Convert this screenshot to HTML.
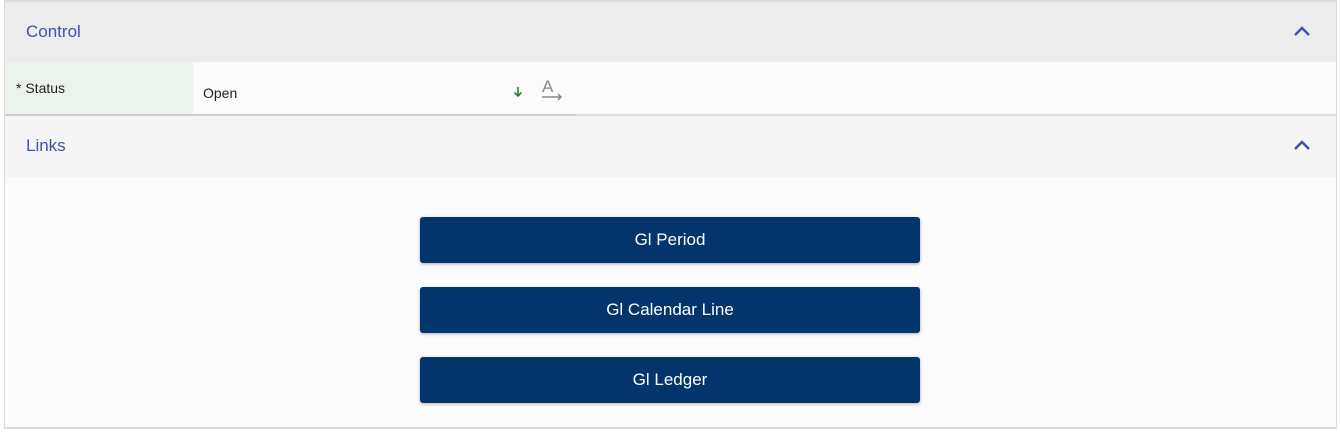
<!DOCTYPE html>
<html><head><style>
body{margin:0;width:1340px;height:432px;background:#fff;font-family:"Liberation Sans",sans-serif;position:relative;overflow:hidden}
.box{position:absolute;left:4px;top:0;width:1331px;height:425px;border:1px solid #dcdcdc;border-top:2px solid #dcdcdc;border-bottom:2px solid #dcdcdc;background:#fbfbfb}
.h{position:absolute;left:0;right:0;height:60px;}
.h span{position:absolute;left:21px;top:20px;font-size:17px;color:#3f51b5}
.h svg{position:absolute;right:26px;top:24px}
.btn{position:absolute;left:415px;width:500px;height:46px;background:#03346b;border-radius:3px;color:#fff;font-size:17px;text-align:center;line-height:46px;box-shadow:0 1px 3px rgba(0,0,0,.3)}
</style></head><body>
<div class="box">
<div class="h" style="top:0;background:#ececec"><span>Control</span><svg width="16" height="10"><path d="M1 9L8 2L15 9" stroke="#3f51b5" stroke-width="2.5" fill="none"/></svg></div>
<div style="position:absolute;top:60px;left:0;right:0;height:52px;background:#fbfbfb"></div>
<div style="position:absolute;top:60px;left:0;width:188px;height:52px;background:#ecf3ec"></div>
<div style="position:absolute;top:78px;left:11px;font-size:14px;color:#222">* Status</div>
<div style="position:absolute;top:83px;left:198px;font-size:14px;color:#222">Open</div>
<svg style="position:absolute;left:508px;top:84px" width="10" height="12"><path d="M5 1V10M1.5 6.5L5 10L8.5 6.5" stroke="#2e7d32" stroke-width="1.6" fill="none"/></svg>
<svg style="position:absolute;left:536px;top:75px" width="24" height="24"><text x="1" y="15" font-size="17" fill="#888" font-family="Liberation Sans">A</text><path d="M1 20H20M17 17L20 20L17 23" stroke="#888" stroke-width="1.5" fill="none"/></svg>
<div style="position:absolute;top:112px;left:0;width:571px;height:2px;background:#d0d0d0"></div>
<div style="position:absolute;top:112px;left:571px;right:0;height:2px;background:#e0e0e0"></div>
<div class="h" style="top:114px;height:61px;background:#f5f5f5"><span>Links</span><svg width="16" height="10"><path d="M1 9L8 2L15 9" stroke="#3f51b5" stroke-width="2.5" fill="none"/></svg></div>
<div class="btn" style="top:215px">Gl Period</div>
<div class="btn" style="top:285px">Gl Calendar Line</div>
<div class="btn" style="top:355px">Gl Ledger</div>
</div>
</body></html>
